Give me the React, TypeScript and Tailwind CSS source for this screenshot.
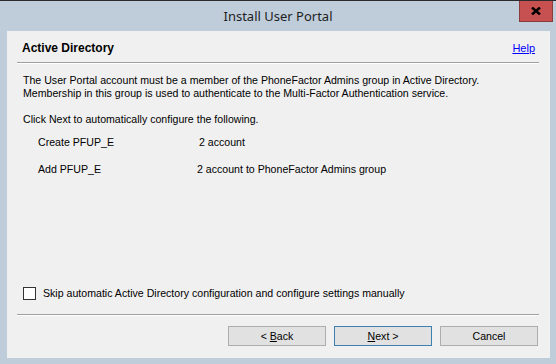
import React from "react";

const Button = ({
  children,
  primary = false,
}: {
  children: React.ReactNode;
  primary?: boolean;
}) => (
  <button
    className={
      primary
        ? "w-[98px] h-[20px] bg-[#e1e1e1] border border-[#3c7fb1] text-[10.6px] leading-none text-black"
        : "w-[98px] h-[20px] bg-[#e1e1e1] border border-[#adadad] text-[10.6px] leading-none text-black"
    }
  >
    {children}
  </button>
);

export default function App() {
  return (
    <div className="w-[556px] h-[364px] bg-[#bfcddb] border-t border-[#2b2b2b] flex flex-col font-['Liberation_Sans',Arial,sans-serif] text-black overflow-hidden">
      {/* title bar */}
      <div className="h-[30px] grid grid-cols-[1fr_auto_1fr] items-start">
        <div />
        <div className="pt-[5px] text-[13px] leading-[20px] text-[#1e1e1e] font-['Noto_Sans',sans-serif]">
          Install User Portal
        </div>
        <div className="flex justify-end pr-[3px]">
          <div className="w-[34px] h-[22px] -mt-px bg-[#c75050] border border-[#8a3b3b] flex items-center justify-center">
            <svg width="10" height="8" viewBox="0 0 10 8">
              <path d="M1 0.5 L9 7.5 M9 0.5 L1 7.5" stroke="#000" strokeWidth="2.4" />
            </svg>
          </div>
        </div>
      </div>

      {/* wizard page */}
      <div className="flex-1 ml-[7px] mr-[6px] mb-[6px] bg-[#f0f0f0] flex flex-col">
        <div className="h-[31px] pt-[3px] px-[15px] flex items-center justify-between">
          <h1 className="text-[12px] font-bold leading-[14px]">Active Directory</h1>
          <a href="#" className="text-[11px] leading-[14px] text-[#0000ff] underline">
            Help
          </a>
        </div>
        <div className="ml-[10px] mr-[11px] h-[2px] border-t border-[#a0a0a0] border-b border-b-white" />

        <div className="px-[16px] text-[10.6px] leading-[13px]">
          <p className="mt-[10px]">
            The User Portal account must be a member of the PhoneFactor Admins group in Active Directory.
            <br />
            Membership in this group is used to authenticate to the Multi-Factor Authentication service.
          </p>
          <p className="mt-[13px]">Click Next to automatically configure the following.</p>
          <div className="mt-[10px] pl-[15px] flex whitespace-nowrap">
            <span className="w-[72px]">Create PFUP_E</span>
            <span className="ml-[89px]">2 account</span>
          </div>
          <div className="mt-[14px] pl-[15px] flex whitespace-nowrap">
            <span className="w-[61px]">Add PFUP_E</span>
            <span className="ml-[98px]">2 account to PhoneFactor Admins group</span>
          </div>
        </div>

        <label className="mt-auto pl-[16px] flex items-center gap-[7px] text-[10.6px] leading-[13px]">
          <span className="w-[13px] h-[13px] border border-[#333] bg-white" />
          Skip automatic Active Directory configuration and configure settings manually
        </label>

        <div className="mt-[14px] ml-[10px] mr-[11px] h-[2px] border-t border-[#a0a0a0] border-b border-b-white" />

        <div className="mt-[10px] mb-[12px] pr-[12px] flex justify-end gap-[8px]">
          <Button>
            &lt; <span className="underline">B</span>ack
          </Button>
          <Button primary>
            <span className="underline">N</span>ext &gt;
          </Button>
          <Button>Cancel</Button>
        </div>
      </div>
    </div>
  );
}
